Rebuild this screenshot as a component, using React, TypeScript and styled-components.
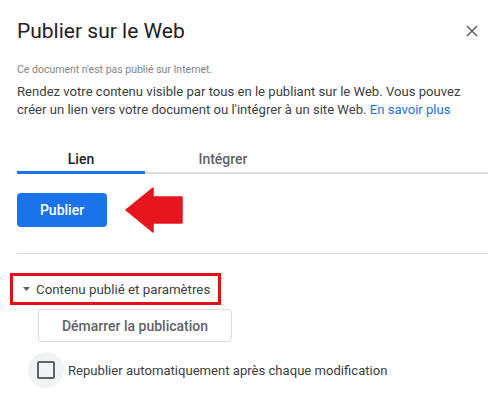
import React from 'react';
import styled, { createGlobalStyle } from 'styled-components';

const GlobalStyle = createGlobalStyle`
  html, body {
    margin: 0;
    background: #ffffff;
    font-family: Roboto, "Liberation Sans", sans-serif;
  }
`;

const App: React.FC = () => {
  return (
    <Dialog>
      <GlobalStyle />
      <Header>
        <Title>Publier sur le Web</Title>
        <CloseButton aria-label="Fermer">
          <svg width="24" height="24" viewBox="0 0 24 24">
            <path d="M7 7L17 17M17 7L7 17" stroke="#5f6368" strokeWidth="1.6" fill="none" />
          </svg>
        </CloseButton>
      </Header>

      <Notice>Ce document n'est pas publié sur Internet.</Notice>
      <Description>
        Rendez votre contenu visible par tous en le publiant sur le Web. Vous pouvez
        créer un lien vers votre document ou l'intégrer à un site Web.{' '}
        <Link href="#">En savoir plus</Link>
      </Description>

      <TabList>
        <Tab $active $width={128}>Lien</Tab>
        <Tab $width={156}>Intégrer</Tab>
      </TabList>

      <PublishRow>
        <PrimaryButton>Publier</PrimaryButton>
        <Arrow width="58" height="46" viewBox="0 0 58 46">
          <path
            d="M1 23 L28 1 L28 10 L57 10 L57 36 L28 36 L28 45 Z"
            fill="#e5161e"
            stroke="#e5161e"
            strokeWidth="1.5"
            strokeLinejoin="round"
          />
        </Arrow>
      </PublishRow>

      <Divider />

      <Highlight>
        <Toggle>
          <svg width="7" height="4" viewBox="0 0 7 4">
            <path d="M0 0H7L3.5 4Z" fill="#5f6368" />
          </svg>
          Contenu publié et paramètres
        </Toggle>
      </Highlight>

      <SecondaryButton>Démarrer la publication</SecondaryButton>

      <CheckRow>
        <CheckHalo>
          <CheckBox />
        </CheckHalo>
        <CheckLabel>Republier automatiquement après chaque modification</CheckLabel>
      </CheckRow>
    </Dialog>
  );
};

export default App;

const Dialog = styled.div`
  display: flex;
  flex-direction: column;
  align-items: flex-start;
  padding: 17px 12px 0 17px;
  width: 500px;
  height: 397px;
  box-sizing: border-box;
  overflow: hidden;
`;

const Header = styled.div`
  display: flex;
  align-items: center;
  justify-content: space-between;
  align-self: stretch;
`;

const Title = styled.h1`
  margin: 0;
  font-size: 21px;
  line-height: 28px;
  font-weight: 400;
  color: #202124;
`;

const CloseButton = styled.button`
  display: flex;
  border: none;
  background: none;
  padding: 0;
  margin-right: 4px;
  cursor: pointer;
`;

const Notice = styled.div`
  margin-top: 17px;
  font-size: 10.5px;
  line-height: 16px;
  color: #80868b;
`;

const Description = styled.p`
  margin: 5px 0 0;
  font-size: 13.1px;
  line-height: 18px;
  color: #3c4043;
`;

const Link = styled.a`
  color: #1a73e8;
  text-decoration: none;
`;

const TabList = styled.div`
  display: flex;
  align-self: stretch;
  margin-top: 21px;
  box-shadow: inset 0 -2px 0 #dadce0;
`;

const Tab = styled.div<{ $active?: boolean; $width: number }>`
  width: ${p => p.$width}px;
  padding: 9px 0 ${p => (p.$active ? 2 : 5)}px;
  text-align: center;
  font-size: 14px;
  line-height: 20px;
  font-weight: 500;
  color: ${p => (p.$active ? '#202124' : '#5f6368')};
  border-bottom: ${p => (p.$active ? '3px solid #1a73e8' : 'none')};
`;

const PublishRow = styled.div`
  display: flex;
  align-items: center;
  margin-top: 13px;
`;

const PrimaryButton = styled.button`
  width: 90px;
  height: 34px;
  border: none;
  border-radius: 4px;
  background: #1a73e8;
  color: #ffffff;
  font-family: Roboto, "Liberation Sans", sans-serif;
  font-size: 14px;
  font-weight: 500;
  cursor: pointer;
`;

const Arrow = styled.svg`
  margin-left: 18px;
`;

const Divider = styled.div`
  align-self: stretch;
  height: 1px;
  margin-top: 20px;
  background: #dadce0;
`;

const Highlight = styled.div`
  margin: 19px 0 0 -7px;
  border: 3px solid #e3101b;
`;

const Toggle = styled.div`
  display: flex;
  align-items: center;
  gap: 6px;
  height: 26px;
  padding: 0 8px 0 10px;
  font-size: 13.3px;
  color: #3c4043;
`;

const SecondaryButton = styled.button`
  margin: 4px 0 0 21px;
  width: 194px;
  height: 33px;
  border: 1px solid #dadce0;
  border-radius: 4px;
  background: #ffffff;
  color: #5f6368;
  font-family: Roboto, "Liberation Sans", sans-serif;
  font-size: 14px;
  font-weight: 500;
  cursor: pointer;
`;

const CheckRow = styled.div`
  display: flex;
  align-items: center;
  gap: 4px;
  margin: 10px 0 0 11px;
`;

const CheckHalo = styled.div`
  display: flex;
  align-items: center;
  justify-content: center;
  width: 36px;
  height: 36px;
  border-radius: 50%;
  background: #f1f3f4;
`;

const CheckBox = styled.div`
  width: 14px;
  height: 14px;
  border: 2px solid #5f6368;
  border-radius: 2px;
`;

const CheckLabel = styled.span`
  font-size: 13.1px;
  color: #3c4043;
`;
